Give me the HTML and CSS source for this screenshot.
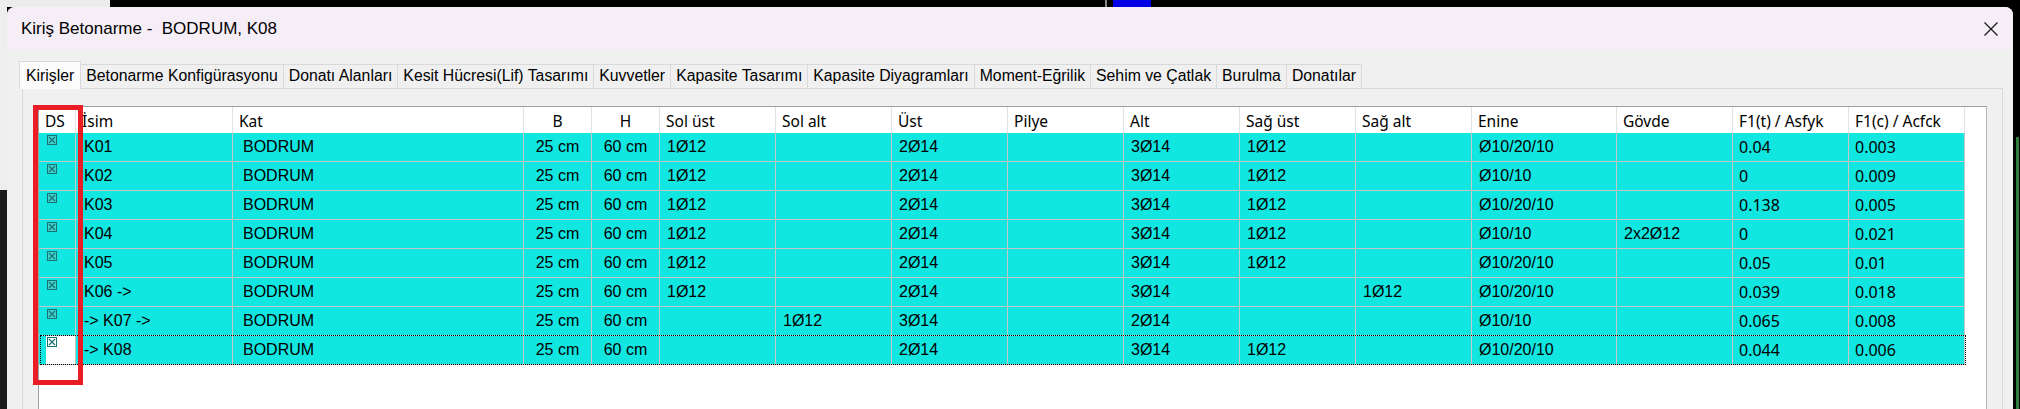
FILE: index.html
```html
<!DOCTYPE html>
<html lang="tr">
<head>
<meta charset="utf-8">
<title>Kiriş Betonarme</title>
<link rel="stylesheet" href="styles.css">
</head>
<body>
<div class="desktop">
  <div class="bg bg-topleft"></div>
  <div class="bg bg-left"></div>
  <div class="bg bg-leftlow"></div>
  <div class="bg bg-vline"></div>
  <div class="bg bg-blue"></div>
  <div class="bg bg-right"></div>

  <div class="window">
    <div class="titlebar">
      <span class="title">Kiriş Betonarme -  BODRUM, K08</span>
      <svg class="close" viewBox="0 0 14 14" width="14" height="14"><path d="M0.5 0.5 L13.5 13.5 M13.5 0.5 L0.5 13.5" stroke="#1a1a1a" stroke-width="1.3" fill="none"/></svg>
    </div>
    <div class="client">
      <div class="tabs">
        <div class="tab active">Kirişler</div>
        <div class="tab">Betonarme Konfigürasyonu</div>
        <div class="tab">Donatı Alanları</div>
        <div class="tab">Kesit Hücresi(Lif) Tasarımı</div>
        <div class="tab">Kuvvetler</div>
        <div class="tab">Kapasite Tasarımı</div>
        <div class="tab">Kapasite Diyagramları</div>
        <div class="tab">Moment-Eğrilik</div>
        <div class="tab">Sehim ve Çatlak</div>
        <div class="tab">Burulma</div>
        <div class="tab">Donatılar</div>
      </div>
      <div class="panel">
        <div class="grid">
          <div class="row head">
            <div class="c">DS</div><div class="c">İsim</div><div class="c">Kat</div>
            <div class="c ctr">B</div><div class="c ctr">H</div>
            <div class="c">Sol üst</div><div class="c">Sol alt</div><div class="c">Üst</div><div class="c">Pilye</div>
            <div class="c">Alt</div><div class="c">Sağ üst</div><div class="c">Sağ alt</div><div class="c">Enine</div>
            <div class="c">Gövde</div><div class="c">F1(t) / Asfyk</div><div class="c">F1(c) / Acfck</div>
          </div>

          <div class="row data">
            <div class="c ds"><svg class="chk" viewBox="0 0 10 10"><rect x="0.5" y="0.5" width="9" height="9"/><path d="M2 2 L8 8 M8 2 L2 8"/></svg></div>
            <div class="c name">K01</div><div class="c name kat">BODRUM</div>
            <div class="c num ctr">25 cm</div><div class="c num ctr">60 cm</div>
            <div class="c num">1Ø12</div><div class="c num"></div><div class="c num">2Ø14</div><div class="c num"></div>
            <div class="c num">3Ø14</div><div class="c num">1Ø12</div><div class="c num"></div><div class="c num">Ø10/20/10</div>
            <div class="c num"></div><div class="c val">0.04</div><div class="c val">0.003</div>
          </div>
          <div class="row data">
            <div class="c ds"><svg class="chk" viewBox="0 0 10 10"><rect x="0.5" y="0.5" width="9" height="9"/><path d="M2 2 L8 8 M8 2 L2 8"/></svg></div>
            <div class="c name">K02</div><div class="c name kat">BODRUM</div>
            <div class="c num ctr">25 cm</div><div class="c num ctr">60 cm</div>
            <div class="c num">1Ø12</div><div class="c num"></div><div class="c num">2Ø14</div><div class="c num"></div>
            <div class="c num">3Ø14</div><div class="c num">1Ø12</div><div class="c num"></div><div class="c num">Ø10/10</div>
            <div class="c num"></div><div class="c val">0</div><div class="c val">0.009</div>
          </div>
          <div class="row data">
            <div class="c ds"><svg class="chk" viewBox="0 0 10 10"><rect x="0.5" y="0.5" width="9" height="9"/><path d="M2 2 L8 8 M8 2 L2 8"/></svg></div>
            <div class="c name">K03</div><div class="c name kat">BODRUM</div>
            <div class="c num ctr">25 cm</div><div class="c num ctr">60 cm</div>
            <div class="c num">1Ø12</div><div class="c num"></div><div class="c num">2Ø14</div><div class="c num"></div>
            <div class="c num">3Ø14</div><div class="c num">1Ø12</div><div class="c num"></div><div class="c num">Ø10/20/10</div>
            <div class="c num"></div><div class="c val">0.138</div><div class="c val">0.005</div>
          </div>
          <div class="row data">
            <div class="c ds"><svg class="chk" viewBox="0 0 10 10"><rect x="0.5" y="0.5" width="9" height="9"/><path d="M2 2 L8 8 M8 2 L2 8"/></svg></div>
            <div class="c name">K04</div><div class="c name kat">BODRUM</div>
            <div class="c num ctr">25 cm</div><div class="c num ctr">60 cm</div>
            <div class="c num">1Ø12</div><div class="c num"></div><div class="c num">2Ø14</div><div class="c num"></div>
            <div class="c num">3Ø14</div><div class="c num">1Ø12</div><div class="c num"></div><div class="c num">Ø10/10</div>
            <div class="c num">2x2Ø12</div><div class="c val">0</div><div class="c val">0.021</div>
          </div>
          <div class="row data">
            <div class="c ds"><svg class="chk" viewBox="0 0 10 10"><rect x="0.5" y="0.5" width="9" height="9"/><path d="M2 2 L8 8 M8 2 L2 8"/></svg></div>
            <div class="c name">K05</div><div class="c name kat">BODRUM</div>
            <div class="c num ctr">25 cm</div><div class="c num ctr">60 cm</div>
            <div class="c num">1Ø12</div><div class="c num"></div><div class="c num">2Ø14</div><div class="c num"></div>
            <div class="c num">3Ø14</div><div class="c num">1Ø12</div><div class="c num"></div><div class="c num">Ø10/20/10</div>
            <div class="c num"></div><div class="c val">0.05</div><div class="c val">0.01</div>
          </div>
          <div class="row data">
            <div class="c ds"><svg class="chk" viewBox="0 0 10 10"><rect x="0.5" y="0.5" width="9" height="9"/><path d="M2 2 L8 8 M8 2 L2 8"/></svg></div>
            <div class="c name">K06 -&gt;</div><div class="c name kat">BODRUM</div>
            <div class="c num ctr">25 cm</div><div class="c num ctr">60 cm</div>
            <div class="c num">1Ø12</div><div class="c num"></div><div class="c num">2Ø14</div><div class="c num"></div>
            <div class="c num">3Ø14</div><div class="c num"></div><div class="c num">1Ø12</div><div class="c num">Ø10/20/10</div>
            <div class="c num"></div><div class="c val">0.039</div><div class="c val">0.018</div>
          </div>
          <div class="row data">
            <div class="c ds"><svg class="chk" viewBox="0 0 10 10"><rect x="0.5" y="0.5" width="9" height="9"/><path d="M2 2 L8 8 M8 2 L2 8"/></svg></div>
            <div class="c name">-&gt; K07 -&gt;</div><div class="c name kat">BODRUM</div>
            <div class="c num ctr">25 cm</div><div class="c num ctr">60 cm</div>
            <div class="c num"></div><div class="c num">1Ø12</div><div class="c num">3Ø14</div><div class="c num"></div>
            <div class="c num">2Ø14</div><div class="c num"></div><div class="c num"></div><div class="c num">Ø10/10</div>
            <div class="c num"></div><div class="c val">0.065</div><div class="c val">0.008</div>
          </div>
          <div class="row data focus">
            <div class="c ds"><div class="edit"><svg class="chk" viewBox="0 0 10 10"><rect x="0.5" y="0.5" width="9" height="9"/><path d="M2 2 L8 8 M8 2 L2 8"/></svg></div></div>
            <div class="c name">-&gt; K08</div><div class="c name kat">BODRUM</div>
            <div class="c num ctr">25 cm</div><div class="c num ctr">60 cm</div>
            <div class="c num"></div><div class="c num"></div><div class="c num">2Ø14</div><div class="c num"></div>
            <div class="c num">3Ø14</div><div class="c num">1Ø12</div><div class="c num"></div><div class="c num">Ø10/20/10</div>
            <div class="c num"></div><div class="c val">0.044</div><div class="c val">0.006</div>
          </div>
        </div>
      </div>
    </div>
  </div>

  <div class="annot"></div>
</div>
</body>
</html>
```

FILE: styles.css
```css
html, body {
  margin: 0;
  padding: 0;
}
body {
  width: 2020px;
  height: 409px;
  overflow: hidden;
  background: #000;
}
.desktop {
  position: relative;
  width: 2020px;
  height: 409px;
  padding: 7px 7px 0 7px;
  box-sizing: border-box;
}

/* desktop background behind the dialog */
.bg { position: absolute; }
.bg-topleft { left: 0; top: 0; width: 110px; height: 7px; background: #ececec; }
.bg-left { left: 0; top: 0; width: 7px; height: 190px; background: #eeeeee; }
.bg-leftlow { left: 0; top: 190px; width: 7px; height: 219px; background: #1b1b1b; }
.bg-vline { left: 1105px; top: 0; width: 2px; height: 7px; background: #8a8a8a; }
.bg-blue { left: 1113px; top: 0; width: 38px; height: 7px; background: #0000e6; }
.bg-right { left: 2016px; top: 137px; width: 3px; height: 272px; background: #2f7d3a; }

.window {
  position: relative;
  height: 402px;
  background: #f0f0f0;
  border-radius: 8px 8px 0 0;
  overflow: hidden;
}

.titlebar {
  height: 43px;
  display: flex;
  align-items: center;
  background: #f6eef6;
  padding: 0 15px 0 14px;
}
.title {
  font-family: "Liberation Sans", Arial, sans-serif;
  font-size: 17px;
  line-height: 20px;
  color: #000;
  white-space: pre;
}
.close {
  margin-left: auto;
  display: block;
}

.client {
  padding-top: 11px;
}

.tabs {
  display: flex;
  align-items: flex-end;
  height: 27px;
  padding-left: 14px;
  position: relative;
  z-index: 2;
}
.tab {
  height: 24px;
  box-sizing: border-box;
  padding: 1px 5px 0 5px;
  margin-left: -1px;
  border: 1px solid #d9d9d9;
  border-bottom: none;
  background: #f0f0f0;
  font-family: "Liberation Sans", Arial, sans-serif;
  font-size: 15.8px;
  line-height: 20px;
  color: #000;
  white-space: nowrap;
}
.tab.active {
  height: 28px;
  margin-bottom: -1px;
  margin-left: -2px;
  padding: 4px 6px 0 6px;
  background: #fbfbfb;
}

.panel {
  margin: 0 10px 0 15px;
  height: 330px;
  border: 1px solid #d9d9d9;
  background: #f0f0f0;
  padding: 17px 0 0 15px;
}

.grid {
  width: 1949px;
  height: 320px;
  box-sizing: border-box;
  border: 1px solid #a0a0a0;
  border-right-color: #b4b4b4;
  background: #fff;
}

.row {
  position: relative;
  display: grid;
  grid-template-columns: 37px 157px 291px 68px 68px repeat(7, 116px) 145px repeat(3, 116px);
  width: 1927px;
  height: 29px;
}
.c {
  box-sizing: border-box;
  display: flex;
  align-items: center;
  padding-left: 7px;
  overflow: hidden;
  white-space: nowrap;
  color: #000;
}
.c.ctr {
  justify-content: center;
  padding-left: 0;
}

.row.head {
  height: 26px;
  background: #fff;
}
.head .c {
  border-right: 1px solid #e3e3e3;
  font-family: "Noto Sans", "DejaVu Sans", sans-serif;
  font-size: 15.5px;
  line-height: 20px;
  padding-left: 6px;
  padding-top: 1px;
}
.head .c.ctr { padding-left: 0; }

.data .c {
  background: #12e6e1;
  border-right: 1px solid #c6c6c6;
  border-bottom: 1px solid #c6c6c6;
  font-family: "Liberation Sans", Arial, sans-serif;
  font-size: 16px;
  line-height: 20px;
}
.data .c.name { padding-left: 8px; }
.data .c.kat { padding-left: 10px; }
.data .c.num {
  font-family: "Liberation Sans", Arial, sans-serif;
  font-size: 16px;
  padding-left: 7px;
}
.data .c.num.ctr { padding-left: 0; }
.data .c.val {
  font-family: "Noto Sans", "DejaVu Sans", sans-serif;
  font-size: 16px;
  padding-left: 6px;
}

.data .c.ds {
  align-items: flex-start;
  padding: 2px 0 0 8px;
}
.chk {
  width: 10px;
  height: 10px;
  display: block;
}
.chk rect {
  fill: #3fd3cf;
  stroke: #187273;
  stroke-width: 1;
}
.chk path {
  stroke: #187273;
  stroke-width: 1.2;
  fill: none;
}

.focus .c.ds {
  padding: 0 0 0 7px;
  align-items: stretch;
}
.focus .edit {
  width: 29px;
  background: #fff;
  padding: 1px 0 0 1px;
  box-sizing: border-box;
}
.focus .edit .chk rect { fill: #fff; }
.row.focus::after {
  content: "";
  position: absolute;
  left: 1px;
  top: -1px;
  right: 0;
  bottom: 0;
  border: 1px dotted #000;
  pointer-events: none;
}

.annot {
  position: absolute;
  left: 33px;
  top: 105px;
  width: 50px;
  height: 280px;
  box-sizing: border-box;
  border: 5px solid #ea1d25;
}
```
